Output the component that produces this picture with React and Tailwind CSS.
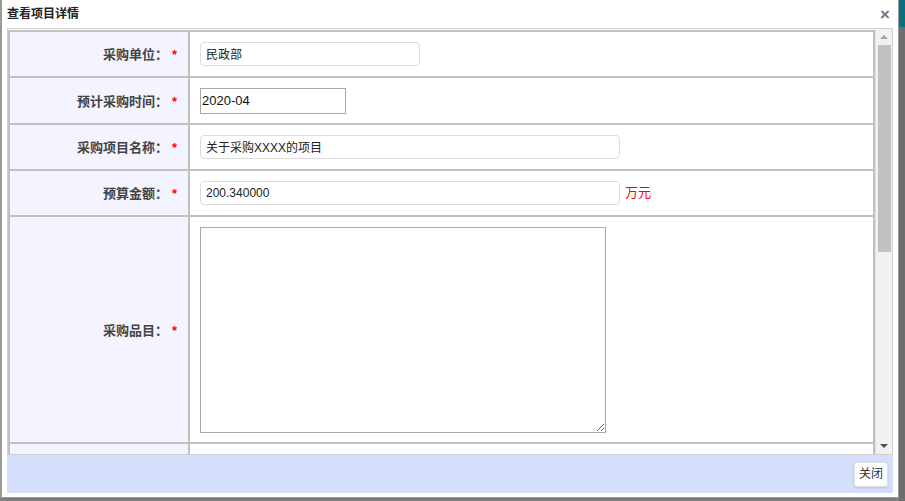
import React from "react";

const rows = [
  { label: "采购单位：", h: "h-[46px]", field: "unit" },
  { label: "预计采购时间：", h: "h-[47px]", field: "time" },
  { label: "采购项目名称：", h: "h-[46px]", field: "name" },
  { label: "预算金额：", h: "h-[46px]", field: "budget" },
  { label: "采购品目：", h: "h-[227px]", field: "items" },
  { label: "", h: "h-[30px]", field: "more" },
];

function Field({ field }) {
  if (field === "unit") {
    return (
      <input
        readOnly
        defaultValue="民政部"
        className="w-[220px] h-[24px] px-[5px] rounded-[4px] border border-[#dcdcdc] text-[12px] text-[#222] outline-none"
      />
    );
  }
  if (field === "time") {
    return (
      <input
        readOnly
        defaultValue="2020-04"
        className="w-[146px] h-[26px] px-[1px] border border-[#a9a9a9] text-[13px] text-[#111] outline-none"
      />
    );
  }
  if (field === "name") {
    return (
      <input
        readOnly
        defaultValue="关于采购XXXX的项目"
        className="w-[420px] h-[24px] px-[5px] rounded-[4px] border border-[#dcdcdc] text-[12px] text-[#222] outline-none"
      />
    );
  }
  if (field === "budget") {
    return (
      <div className="flex items-center gap-[5px]">
        <input
          readOnly
          defaultValue="200.340000"
          className="w-[420px] h-[24px] px-[5px] rounded-[4px] border border-[#dcdcdc] text-[12px] text-[#222] outline-none"
        />
        <span className="text-[13px] text-[#ff0000]">万元</span>
      </div>
    );
  }
  if (field === "items") {
    return (
      <textarea
        readOnly
        className="block w-[406px] h-[206px] border border-[#a9a9a9] outline-none"
      />
    );
  }
  return null;
}

export default function App() {
  return (
    <div
      className="w-[905px] h-[501px] flex bg-[#8a8a8a] overflow-hidden"
      style={{ fontFamily: '"Liberation Sans", "Noto Sans CJK SC", sans-serif' }}
    >
      <div className="w-[899px] h-[498px] bg-white border-l-2 border-r border-b border-[#9a9a9a] flex flex-col shadow-md">
        {/* title bar */}
        <div className="h-[28px] flex items-center justify-between pl-[5px] pr-[8px] shrink-0">
          <span className="text-[12px] font-bold text-[#222]">查看项目详情</span>
          <span className="text-[17px] font-bold text-[#777] leading-none">×</span>
        </div>

        {/* body */}
        <div className="mx-[5px] h-[427px] border border-[#d0d0d0] flex shrink-0 overflow-hidden">
          <div className="flex-1 overflow-hidden pt-[1px]">
            <table className="w-full border-separate border-spacing-0 border border-[#c0c0c0]">
              <tbody>
                {rows.map((r, i) => (
                  <tr key={i} className={r.h}>
                    <td className="w-[180px] bg-[#f3f4fe] border border-[#c0c0c0] text-right pr-[11px] align-middle">
                      {r.label && (
                        <span className="text-[13px] font-bold text-[#444]">
                          {r.label}
                          <span className="text-[#ff0000] ml-[4px]">*</span>
                        </span>
                      )}
                    </td>
                    <td className="border border-[#c0c0c0] pl-[10px] align-middle">
                      <Field field={r.field} />
                    </td>
                  </tr>
                ))}
              </tbody>
            </table>
          </div>

          {/* scrollbar */}
          <div className="w-[17px] bg-[#f1f1f1] border-l border-[#e2e2e2] flex flex-col items-center">
            <div className="h-[16px] w-full flex items-center justify-center">
              <div className="w-0 h-0 border-l-[4px] border-r-[4px] border-b-[4px] border-l-transparent border-r-transparent border-b-[#a3a3a3]" />
            </div>
            <div className="w-[13px] h-[207px] bg-[#c1c1c1]" />
            <div className="flex-1" />
            <div className="h-[16px] w-full flex items-center justify-center">
              <div className="w-0 h-0 border-l-[4px] border-r-[4px] border-t-[4px] border-l-transparent border-r-transparent border-t-[#505050]" />
            </div>
          </div>
        </div>

        {/* footer */}
        <div className="mx-[5px] h-[38px] bg-[#d3dffc] flex items-center justify-end pr-[5px] shrink-0">
          <button className="h-[25px] px-[4px] bg-white rounded-[3px] border border-[#e0e0e0] shadow text-[12px] text-[#333]">
            关闭
          </button>
        </div>
      </div>
      <div className="flex-1 flex flex-col">
        <div className="h-[27px] bg-[#0e6f7e]" />
        <div className="flex-1 bg-[#6d6d6d]" />
      </div>
    </div>
  );
}
